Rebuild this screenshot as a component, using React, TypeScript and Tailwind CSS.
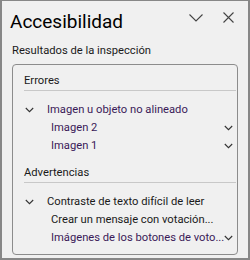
import React from "react";

const font = { fontFamily: "Roboto, 'Noto Sans', sans-serif" };

function Chevron({ className = "" }: { className?: string }) {
  return (
    <svg width="9" height="6" viewBox="0 0 9 6" className={className}>
      <path d="M0.8 1 L4.5 4.7 L8.2 1" fill="none" stroke="#333" strokeWidth="1.1" />
    </svg>
  );
}

function Item({ text, level, purple, chevron, right }: { text: string; level: 1 | 2; purple?: boolean; chevron?: boolean; right?: boolean }) {
  return (
    <div className="flex h-[18px] items-center">
      <div className="w-[23px] shrink-0 flex items-center">{chevron && <Chevron className="ml-[1px]" />}</div>
      <div
        className={`${level === 2 ? "pl-[4px]" : ""} flex-1 whitespace-nowrap text-[11.2px] leading-none ${purple ? "text-[#3a1a58]" : "text-[#1a1a1a]"}`}
      >
        {text}
      </div>
      <div className="w-[12px] shrink-0 flex items-center">{right && <Chevron />}</div>
    </div>
  );
}

export default function App() {
  return (
    <div
      className="w-[250px] h-[260px] bg-[#f0f0f0] border-t border-l-2 border-r-2 border-b-2 border-[#878787] flex flex-col"
      style={font}
    >
      <div className="flex items-center h-[32px] pt-[8px] pl-[8px] pr-[14px]">
        <div className="flex-1 text-[19px] leading-none text-black">Accesibilidad</div>
        <svg width="14" height="8" viewBox="0 0 14 8" className="mr-[20px] mt-[-6px]">
          <path d="M0.5 0.5 L7 7 L13.5 0.5" fill="none" stroke="#444" strokeWidth="1.1" />
        </svg>
        <svg width="11" height="11" viewBox="0 0 11 11" className="mt-[-8px]">
          <path d="M0.5 0.5 L10.5 10.5 M10.5 0.5 L0.5 10.5" fill="none" stroke="#444" strokeWidth="1.1" />
        </svg>
      </div>
      <div className="pl-[10px] mt-[12px] text-[11.2px] leading-none text-[#1a1a1a] h-[14px]">Resultados de la inspección</div>
      <div className="ml-[10px] mt-[5px] w-[226px] h-[191px] border border-[#8c8c8c] rounded-[4px] pt-[6px] pl-[11px] pr-[1px]">
        <div className="h-[19px] flex items-center text-[11.2px] leading-none text-[#1a1a1a]">Errores</div>
        <div className="h-px bg-[#c8c8c8]" />
        <div className="mt-[10px]">
          <Item text="Imagen u objeto no alineado" level={1} chevron purple />
          <Item text="Imagen 2" level={2} purple right />
          <Item text="Imagen 1" level={2} purple right />
        </div>
        <div className="mt-[8px] h-[19px] flex items-center text-[11.2px] leading-none text-[#1a1a1a]">Advertencias</div>
        <div className="h-px bg-[#c8c8c8]" />
        <div className="mt-[10px]">
          <Item text="Contraste de texto difícil de leer" level={1} chevron />
          <Item text="Crear un mensaje con votación..." level={2} />
          <Item text="Imágenes de los botones de voto..." level={2} purple right />
        </div>
      </div>
    </div>
  );
}
